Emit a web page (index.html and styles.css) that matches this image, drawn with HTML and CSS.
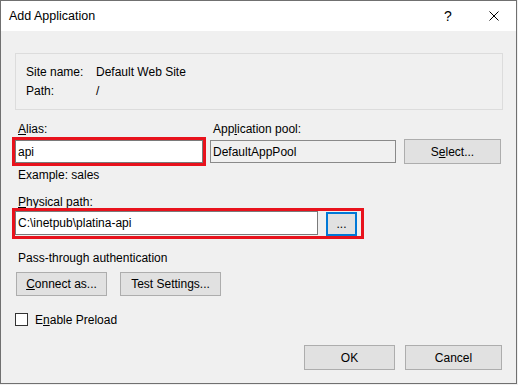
FILE: index.html
```html
<!DOCTYPE html>
<html>
<head>
<meta charset="utf-8">
<link rel="stylesheet" href="styles.css">
</head>
<body>
<div class="window">
  <div class="titlebar">
    <span class="title">Add Application</span>
    <span class="cap-btn help">?</span>
    <span class="cap-btn close"><svg width="10" height="10" viewBox="0 0 10 10"><path d="M0.5 0.5 L9.5 9.5 M9.5 0.5 L0.5 9.5" stroke="#000" stroke-width="1" fill="none"/></svg></span>
  </div>
  <div class="content">
    <div class="groupbox">
      <div class="info">
        <span>Site name:</span><span>Default Web Site</span>
        <span>Path:</span><span>/</span>
      </div>
    </div>
    <div class="row1">
      <div class="col alias-col">
        <div class="lbl"><u>A</u>lias:</div>
        <div class="textbox hl">api</div>
      </div>
      <div class="col pool-col">
        <div class="lbl">App<u>l</u>ication pool:</div>
        <div class="textbox ro">DefaultAppPool</div>
      </div>
      <button class="btn select">S<u>e</u>lect...</button>
    </div>
    <div class="hint">Example: sales</div>
    <div class="lbl path-lbl"><u>P</u>hysical path:</div>
    <div class="path-wrap hl">
      <div class="textbox path">C:\inetpub\platina-api</div>
      <button class="btn browse">...</button>
    </div>
    <div class="section">Pass-through authentication</div>
    <div class="auth-btns">
      <button class="btn connect"><u>C</u>onnect as...</button>
      <button class="btn test">Test Settin<u>g</u>s...</button>
    </div>
    <div class="check"><span class="box"></span><span class="check-lbl">E<u>n</u>able Preload</span></div>
    <div class="footer">
      <button class="btn ok">OK</button>
      <button class="btn cancel">Cancel</button>
    </div>
  </div>
</div>
</body>
</html>
```

FILE: styles.css
```css
html, body {
  margin: 0;
  padding: 0;
  background: #f0f0f0;
}
body {
  font-family: "Liberation Sans", Arial, sans-serif;
  font-size: 12px;
  color: #000;
}
.window {
  box-sizing: border-box;
  width: 517px;
  height: 384px;
  border: 1px solid #707070;
  background: #f0f0f0;
  display: flex;
  flex-direction: column;
}
.titlebar {
  height: 30px;
  background: #fff;
  display: flex;
  align-items: center;
  flex-shrink: 0;
}
.title {
  flex: 1;
  padding-left: 8px;
  line-height: 30px;
  font-size: 12.5px;
}
.cap-btn {
  width: 46px;
  height: 30px;
  display: flex;
  align-items: center;
  justify-content: center;
}
.help {
  font-size: 14px;
  font-family: "Liberation Sans", Arial, sans-serif;
  padding-left: 2px;
  box-sizing: border-box;
}
.close svg {
  display: block;
  margin-left: 2px;
}
.content {
  padding: 22px 14px 0 14px;
  display: flex;
  flex-direction: column;
  flex: 1;
}
.groupbox {
  box-sizing: border-box;
  width: 488px;
  height: 57px;
  border: 1px solid #dcdcdc;
  padding: 10px 10px;
}
.info {
  display: grid;
  grid-template-columns: 70px 1fr;
  row-gap: 3px;
  line-height: 16px;
}
.row1 {
  display: flex;
  align-items: flex-end;
  margin-top: 11px;
}
.col {
  display: flex;
  flex-direction: column;
}
.lbl {
  line-height: 16px;
  padding-left: 3px;
}
.alias-col {
  width: 188px;
}
.pool-col {
  width: 186px;
  margin-left: 7px;
}
.col .textbox {
  margin-top: 3px;
}
.textbox {
  box-sizing: border-box;
  height: 23px;
  border: 1px solid #7a7a7a;
  background: #fff;
  padding-left: 2px;
  display: flex;
  align-items: center;
  white-space: nowrap;
}
.textbox.ro {
  background: #f0f0f0;
  border-color: #8a8a8a;
}
.hl {
  outline: 3px solid #e8121c;
}
.btn {
  box-sizing: border-box;
  height: 25px;
  border: 1px solid #adadad;
  background: #e1e1e1;
  font-family: "Liberation Sans", Arial, sans-serif;
  font-size: 12px;
  color: #000;
  padding: 0;
  margin: 0;
}
.select {
  width: 97px;
  margin-left: 8px;
  margin-bottom: -1px;
}
.hint {
  margin-top: 4px;
  line-height: 16px;
  padding-left: 3px;
}
.path-lbl {
  margin-top: 11px;
}
.path-wrap {
  margin-top: 1px;
  width: 346px;
  height: 25px;
  display: flex;
  align-items: flex-start;
}
.textbox.path {
  width: 303px;
  height: 24px;
}
.browse {
  width: 31px;
  height: 24px;
  margin-top: 1px;
  margin-left: 8px;
  border: 2px solid #0078d7;
  line-height: 14px;
}
.section {
  margin-top: 14px;
  line-height: 16px;
  padding-left: 3px;
}
.auth-btns {
  display: flex;
  margin-top: 6px;
}
.auth-btns .btn {
  height: 24px;
}
.connect {
  width: 91px;
  margin-left: 1px !important;
}
.test {
  width: 101px;
  margin-left: 13px !important;
}
.check {
  display: flex;
  align-items: center;
  margin-top: 17px;
  height: 13px;
}
.box {
  box-sizing: border-box;
  width: 13px;
  height: 13px;
  border: 1px solid #333;
  background: #fff;
}
.check-lbl {
  margin-left: 7px;
  line-height: 16px;
}
.footer {
  display: flex;
  justify-content: flex-end;
  margin-top: 19px;
}
.ok {
  width: 91px;
}
.cancel {
  width: 97px;
  margin-left: 10px !important;
}
```
